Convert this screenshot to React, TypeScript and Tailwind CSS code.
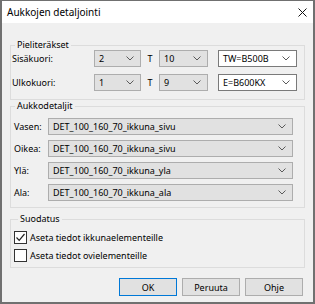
import React from 'react';

const Chevron = () => (
    <svg width="8" height="5" viewBox="0 0 8 5" className="shrink-0">
        <path d="M0.5 0.5 L4 4 L7.5 0.5" fill="none" stroke="#5a5a5a" strokeWidth="1" />
    </svg>
);

interface ComboProps {
    value: string;
    width: string;
    editable?: boolean;
}

const Combo = ({ value, width, editable }: ComboProps) => (
    <div
        className={
            editable
                ? `${width} h-[17px] flex items-center justify-between pl-[4px] pr-[6px] bg-white border border-[#7a7a7a]`
                : `${width} h-[17px] flex items-center justify-between pl-[4px] pr-[6px] bg-[#e1e1e1] border border-[#adadad]`
        }
    >
        <span className="leading-[13px] whitespace-nowrap">{value}</span>
        <Chevron />
    </div>
);

const CheckBox = ({ checked, label }: { checked: boolean; label: string }) => (
    <div className="flex items-center gap-[3px] h-[14px]">
        <div className="w-[13px] h-[13px] bg-white border border-[#333333] flex items-center justify-center">
            {checked && (
                <svg width="11" height="11" viewBox="0 0 11 11">
                    <path d="M1.5 5.5 L4.2 8.3 L9.5 2" fill="none" stroke="#222222" strokeWidth="1.2" />
                </svg>
            )}
        </div>
        <span className="leading-[13px] whitespace-nowrap">{label}</span>
    </div>
);

export default function App() {
    const details = [
        { label: 'Vasen:', value: 'DET_100_160_70_ikkuna_sivu' },
        { label: 'Oikea:', value: 'DET_100_160_70_ikkuna_sivu' },
        { label: 'Ylä:', value: 'DET_100_160_70_ikkuna_yla' },
        { label: 'Ala:', value: 'DET_100_160_70_ikkuna_ala' },
    ];

    return (
        <div className="w-[315px] h-[304px] flex flex-col bg-[#f0f0f0] border-t border-x-2 border-b-2 border-[#707070] font-['Noto_Sans',sans-serif] text-[9px] text-black">
            {/* title bar */}
            <div className="h-[22px] shrink-0 bg-white flex items-center justify-between pl-[5px] pr-[6px]">
                <span className="text-[10px] leading-[13px]">Aukkojen detaljointi</span>
                <svg width="9" height="9" viewBox="0 0 9 9">
                    <path d="M0.5 0.5 L8.5 8.5 M8.5 0.5 L0.5 8.5" stroke="#111111" strokeWidth="1" />
                </svg>
            </div>

            <div className="flex-1 flex flex-col px-[8px]">
                <fieldset className="mt-[17px] border border-[#dcdcdc] px-0 pb-[8px]">
                    <legend className="ml-[4px] px-[2px] leading-[10px]">Pieliteräkset</legend>
                    <div className="flex flex-col gap-[7px]">
                        <div className="flex items-center h-[17px]">
                            <span className="w-[83px] pl-[1px]">Sisäkuori:</span>
                            <Combo value="2" width="w-[47px]" />
                            <span className="w-[18px] text-center">T</span>
                            <Combo value="10" width="w-[49px]" />
                            <div className="ml-[10px]">
                                <Combo value="TW=B500B" width="w-[79px]" editable />
                            </div>
                        </div>
                        <div className="flex items-center h-[17px]">
                            <span className="w-[83px] pl-[1px]">Ulkokuori:</span>
                            <Combo value="1" width="w-[47px]" />
                            <span className="w-[18px] text-center">T</span>
                            <Combo value="9" width="w-[49px]" />
                            <div className="ml-[10px]">
                                <Combo value="E=B600KX" width="w-[79px]" editable />
                            </div>
                        </div>
                    </div>
                </fieldset>

                <fieldset className="mt-[1px] border border-[#dcdcdc] pt-[7px] pb-[6px]">
                    <legend className="ml-[4px] px-[2px] leading-[10px]">Aukkodetaljit</legend>
                    <div className="flex flex-col gap-[5px]">
                        {details.map((d) => (
                            <div key={d.label} className="flex items-center h-[17px]">
                                <span className="w-[37px] pl-[3px]">{d.label}</span>
                                <Combo value={d.value} width="w-[245px]" />
                            </div>
                        ))}
                    </div>
                </fieldset>

                <fieldset className="mt-[6px] border border-[#dcdcdc] pt-[6px] pb-[5px] pl-[3px]">
                    <legend className="ml-[4px] px-[2px] leading-[10px]">Suodatus</legend>
                    <div className="flex flex-col gap-[4px]">
                        <CheckBox checked label="Aseta tiedot ikkunaelementeille" />
                        <CheckBox checked={false} label="Aseta tiedot ovielementeille" />
                    </div>
                </fieldset>

                <div className="mt-[10px] flex justify-end gap-[5px] pr-[2px]">
                    <button className="w-[58px] h-[18px] bg-[#e1e1e1] border border-[#0078d7] leading-[13px]">OK</button>
                    <button className="w-[58px] h-[18px] bg-[#e1e1e1] border border-[#adadad] leading-[13px]">Peruuta</button>
                    <button className="w-[58px] h-[18px] bg-[#e1e1e1] border border-[#adadad] leading-[13px]">Ohje</button>
                </div>
            </div>
        </div>
    );
}
